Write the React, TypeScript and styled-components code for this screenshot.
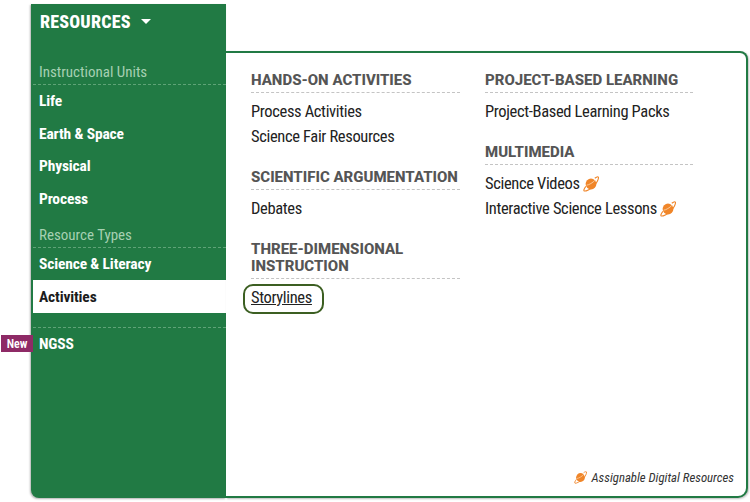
import React from "react";
import styled, { createGlobalStyle } from "styled-components";

const Global = createGlobalStyle`
  html, body { margin: 0; padding: 0; background: #fff; }
  body { font-family: Roboto, sans-serif; font-stretch: 75%; }
`;

const Page = styled.div`
  display: flex;
  align-items: flex-start;
  width: 750px;
  height: 502px;
  padding: 4px 0 0 31px;
  box-sizing: border-box;
  overflow: hidden;
`;

const Sidebar = styled.nav`
  position: relative;
  width: 195px;
  height: 494px;
  box-sizing: border-box;
  background: #217a44;
  border-bottom-left-radius: 8px;
  box-shadow: -1px 1px 2px rgba(0, 0, 0, 0.3);
  padding: 5px 0 0 2px;
  display: flex;
  flex-direction: column;
`;

const Title = styled.div`
  display: flex;
  align-items: center;
  gap: 10px;
  height: 24px;
  padding-left: 7px;
  color: #fff;
  font-size: 18px;
  font-weight: 800;
  letter-spacing: 0.2px;
`;

const Caret = styled.span`
  width: 0;
  height: 0;
  margin-top: 1px;
  border-left: 5px solid transparent;
  border-right: 5px solid transparent;
  border-top: 5px solid #fff;
`;

const SectionLabel = styled.div<{ $top: number }>`
  margin-top: ${(p) => p.$top}px;
  height: 22px;
  line-height: 21px;
  padding-left: 6px;
  color: #a6d0b2;
  font-size: 15px;
  border-bottom: 1px dashed #5fa377;
`;

const Item = styled.a<{ $active?: boolean }>`
  display: flex;
  align-items: center;
  height: 32.5px;
  box-sizing: border-box;
  padding: ${(p) => (p.$active ? "1px" : "0")} 0 0 6px;
  color: ${(p) => (p.$active ? "#1c1c1c" : "#fff")};
  background: ${(p) => (p.$active ? "#fff" : "transparent")};
  font-size: 15.5px;
  font-weight: 700;
  letter-spacing: -0.15px;
`;

const Divider = styled.div`
  margin-top: 14.5px;
  border-top: 1px dashed #5fa377;
`;

const NewBadge = styled.span`
  position: absolute;
  left: -30px;
  top: 331px;
  width: 32px;
  height: 17px;
  display: flex;
  align-items: center;
  justify-content: center;
  background: #8e2a66;
  color: #fff;
  font-size: 12px;
  font-weight: 600;
`;

const Panel = styled.section`
  position: relative;
  margin-top: 47px;
  width: 522px;
  height: 447px;
  box-sizing: border-box;
  background: #fff;
  border: 2px solid #217a44;
  border-left: 0;
  border-radius: 0 8px 10px 0;
  box-shadow: 1px 1px 2px rgba(0, 0, 0, 0.25);
  padding: 19px 0 0 25px;
  display: grid;
  grid-template-columns: 209px 208px;
  column-gap: 25px;
  align-content: start;
`;

const Column = styled.div`
  display: flex;
  flex-direction: column;
`;

const Heading = styled.h3<{ $top?: number }>`
  margin: ${(p) => p.$top ?? 0}px 0 0;
  padding-bottom: 3px;
  border-bottom: 1px dashed #c4c4c4;
  color: #555;
  font-size: 15px;
  font-stretch: 100%;
  font-weight: 800;
  line-height: 17px;
  white-space: pre;
  text-transform: uppercase;
`;

const Links = styled.div`
  padding-top: 6px;
  display: flex;
  flex-direction: column;
`;

const LinkRow = styled.a`
  display: flex;
  align-items: center;
  gap: 3px;
  height: 25px;
  color: #222;
  font-size: 16.5px;
  letter-spacing: -0.35px;
`;

const FocusRing = styled.span`
  align-self: flex-start;
  margin: -1px 0 0 -8px;
  padding: 0 10px 0 6px;
  height: 26px;
  line-height: 24px;
  border: 2px solid #3c5f22;
  border-radius: 10px;
  color: #222;
  font-size: 16.5px;
  letter-spacing: -0.35px;
  text-decoration: underline;
`;

const Legend = styled.div`
  position: absolute;
  right: 12px;
  bottom: 11px;
  display: flex;
  align-items: center;
  gap: 4px;
  color: #333;
  font-size: 12.8px;
  font-style: italic;
`;

const Planet = ({ size = 16 }: { size?: number }) => (
  <svg width={size} height={size} viewBox="0 0 16 16" fill="none" aria-hidden="true">
    <circle cx="8" cy="8" r="5.4" fill="#f0862a" />
    <path d="M3.6 9.2 C6 9 10 6.5 11.8 4.4" stroke="#fbd3a8" strokeWidth="0.9" />
    <path d="M2.9 10.4 C1 12.8 0.4 14.6 1.2 15 C2.8 15.5 7.4 13.2 10.8 10 C14 7 15.9 2.6 15.4 1.2 C15 0.4 13.4 0.9 11.8 2.2" stroke="#f0862a" strokeWidth="1.1" />
  </svg>
);

export default function App() {
  return (
    <>
      <Global />
      <Page>
        <Sidebar>
          <Title>
            RESOURCES <Caret />
          </Title>
          <SectionLabel $top={29}>Instructional Units</SectionLabel>
          <Item>Life</Item>
          <Item>Earth &amp; Space</Item>
          <Item>Physical</Item>
          <Item>Process</Item>
          <SectionLabel $top={9.5}>Resource Types</SectionLabel>
          <Item>Science &amp; Literacy</Item>
          <Item $active>Activities</Item>
          <Divider />
          <Item>NGSS</Item>
          <NewBadge>New</NewBadge>
        </Sidebar>
        <Panel>
          <Column>
            <Heading>Hands-On Activities</Heading>
            <Links>
              <LinkRow>Process Activities</LinkRow>
              <LinkRow>Science Fair Resources</LinkRow>
            </Links>
            <Heading $top={20}>Scientific Argumentation</Heading>
            <Links>
              <LinkRow>Debates</LinkRow>
            </Links>
            <Heading $top={20}>{"Three-Dimensional\nInstruction"}</Heading>
            <Links>
              <FocusRing>Storylines</FocusRing>
            </Links>
          </Column>
          <Column>
            <Heading>Project-Based Learning</Heading>
            <Links>
              <LinkRow>Project-Based Learning Packs</LinkRow>
            </Links>
            <Heading $top={20}>Multimedia</Heading>
            <Links>
              <LinkRow>
                Science Videos <Planet />
              </LinkRow>
              <LinkRow>
                Interactive Science Lessons <Planet />
              </LinkRow>
            </Links>
          </Column>
          <Legend>
            <Planet size={13} /> Assignable Digital Resources
          </Legend>
        </Panel>
      </Page>
    </>
  );
}
